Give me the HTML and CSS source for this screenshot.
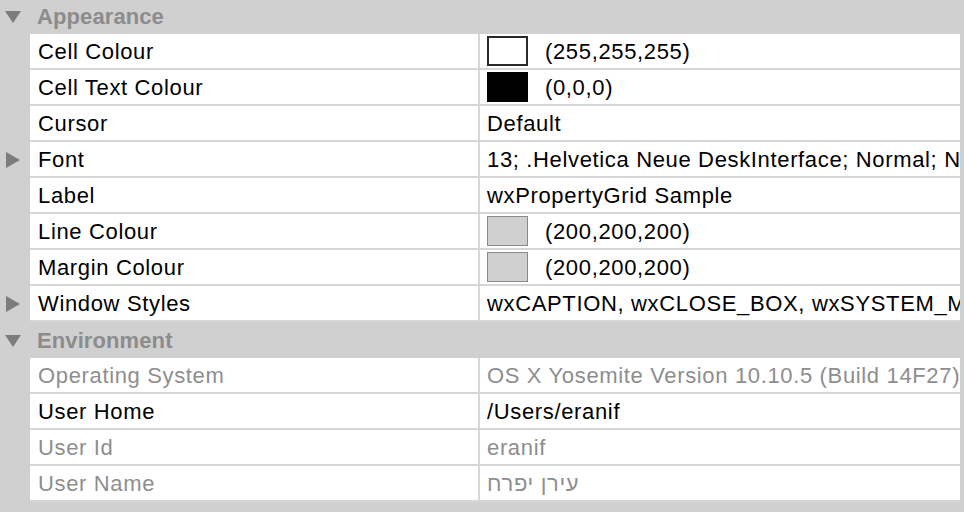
FILE: index.html
```html
<!DOCTYPE html>
<html>
<head>
<meta charset="utf-8">
<link rel="stylesheet" href="styles.css">
</head>
<body>
<div class="viewport">
<div class="grid">
  <div class="cat">
    <div class="gutter"><svg class="tri" width="16" height="14" viewBox="0 0 16 14"><polygon points="0,1 16,1 8,13" /></svg></div>
    <div class="cat-label">Appearance</div>
  </div>
  <div class="row">
    <div class="gutter"></div>
    <div class="name">Cell Colour</div>
    <div class="value"><span class="swatch sw-white"></span>(255,255,255)</div>
  </div>
  <div class="row">
    <div class="gutter"></div>
    <div class="name">Cell Text Colour</div>
    <div class="value"><span class="swatch sw-black"></span>(0,0,0)</div>
  </div>
  <div class="row">
    <div class="gutter"></div>
    <div class="name">Cursor</div>
    <div class="value">Default</div>
  </div>
  <div class="row">
    <div class="gutter"><svg class="tri" width="16" height="16" viewBox="0 0 16 16"><polygon points="1,0 15,8 1,16" /></svg></div>
    <div class="name">Font</div>
    <div class="value">13; .Helvetica Neue DeskInterface; Normal; Normal; Not Underlined</div>
  </div>
  <div class="row">
    <div class="gutter"></div>
    <div class="name">Label</div>
    <div class="value">wxPropertyGrid Sample</div>
  </div>
  <div class="row">
    <div class="gutter"></div>
    <div class="name">Line Colour</div>
    <div class="value"><span class="swatch sw-gray"></span>(200,200,200)</div>
  </div>
  <div class="row">
    <div class="gutter"></div>
    <div class="name">Margin Colour</div>
    <div class="value"><span class="swatch sw-gray"></span>(200,200,200)</div>
  </div>
  <div class="row">
    <div class="gutter"><svg class="tri" width="16" height="16" viewBox="0 0 16 16"><polygon points="1,0 15,8 1,16" /></svg></div>
    <div class="name">Window Styles</div>
    <div class="value">wxCAPTION, wxCLOSE_BOX, wxSYSTEM_MENU, wxRESIZE_BORDER</div>
  </div>
  <div class="cat">
    <div class="gutter"><svg class="tri" width="16" height="14" viewBox="0 0 16 14"><polygon points="0,1 16,1 8,13" /></svg></div>
    <div class="cat-label">Environment</div>
  </div>
  <div class="row">
    <div class="gutter"></div>
    <div class="name disabled">Operating System</div>
    <div class="value disabled">OS X Yosemite Version 10.10.5 (Build 14F27)</div>
  </div>
  <div class="row">
    <div class="gutter"></div>
    <div class="name">User Home</div>
    <div class="value">/Users/eranif</div>
  </div>
  <div class="row">
    <div class="gutter"></div>
    <div class="name disabled">User Id</div>
    <div class="value disabled">eranif</div>
  </div>
  <div class="row">
    <div class="gutter"></div>
    <div class="name disabled">User Name</div>
    <div class="value disabled">עירן יפרח</div>
  </div>
  <div class="cat">
    <div class="gutter"><svg class="tri" width="16" height="14" viewBox="0 0 16 14"><polygon points="0,1 16,1 8,13" /></svg></div>
    <div class="cat-label">More Examples</div>
  </div>
</div>
</div>
</body>
</html>
```
FILE: styles.css
```css
html, body {
  margin: 0;
  padding: 0;
  background: #d0d0d0;
}
.viewport {
  width: 964px;
  height: 512px;
  overflow: hidden;
}
.grid {
  margin-top: -2px;
  width: 960px;
  font-family: "Liberation Sans", Arial, sans-serif;
  font-size: 22px;
  letter-spacing: 0.65px;
  color: #000;
}
.row, .cat {
  display: grid;
  grid-template-columns: 30px 448px 1fr;
  height: 36px;
}
.cat {
  grid-template-columns: 30px 1fr;
}
.gutter {
  display: flex;
  align-items: center;
  justify-content: flex-start;
  padding-left: 5px;
}
.cat .gutter {
  padding-top: 1px;
}
.tri {
  fill: #7c7c7c;
}
.cat-label {
  display: flex;
  align-items: center;
  padding-left: 7px;
  padding-top: 2px;
  font-weight: bold;
  letter-spacing: 0.1px;
  color: #8c8c8c;
  white-space: nowrap;
}
.name, .value {
  background: #fff;
  border-bottom: 2px solid #d6d6d6;
  display: flex;
  align-items: center;
  white-space: nowrap;
  overflow: hidden;
  padding-top: 2px;
  box-sizing: border-box;
}
.name {
  padding-left: 8px;
}
.value {
  border-left: 2px solid #d6d6d6;
  padding-left: 7px;
}
.disabled {
  color: #8e8e8e;
}
.swatch {
  box-sizing: border-box;
  width: 41px;
  height: 30px;
  margin-right: 17px;
  margin-top: -2px;
  flex: none;
  border: 2px solid #2a2a2a;
}
.sw-white { background: #fff; }
.sw-black { background: #000; border-color: #000; }
.sw-gray { background: #d0d0d0; border-color: #8a8a8a; border-width: 1px; }
```
